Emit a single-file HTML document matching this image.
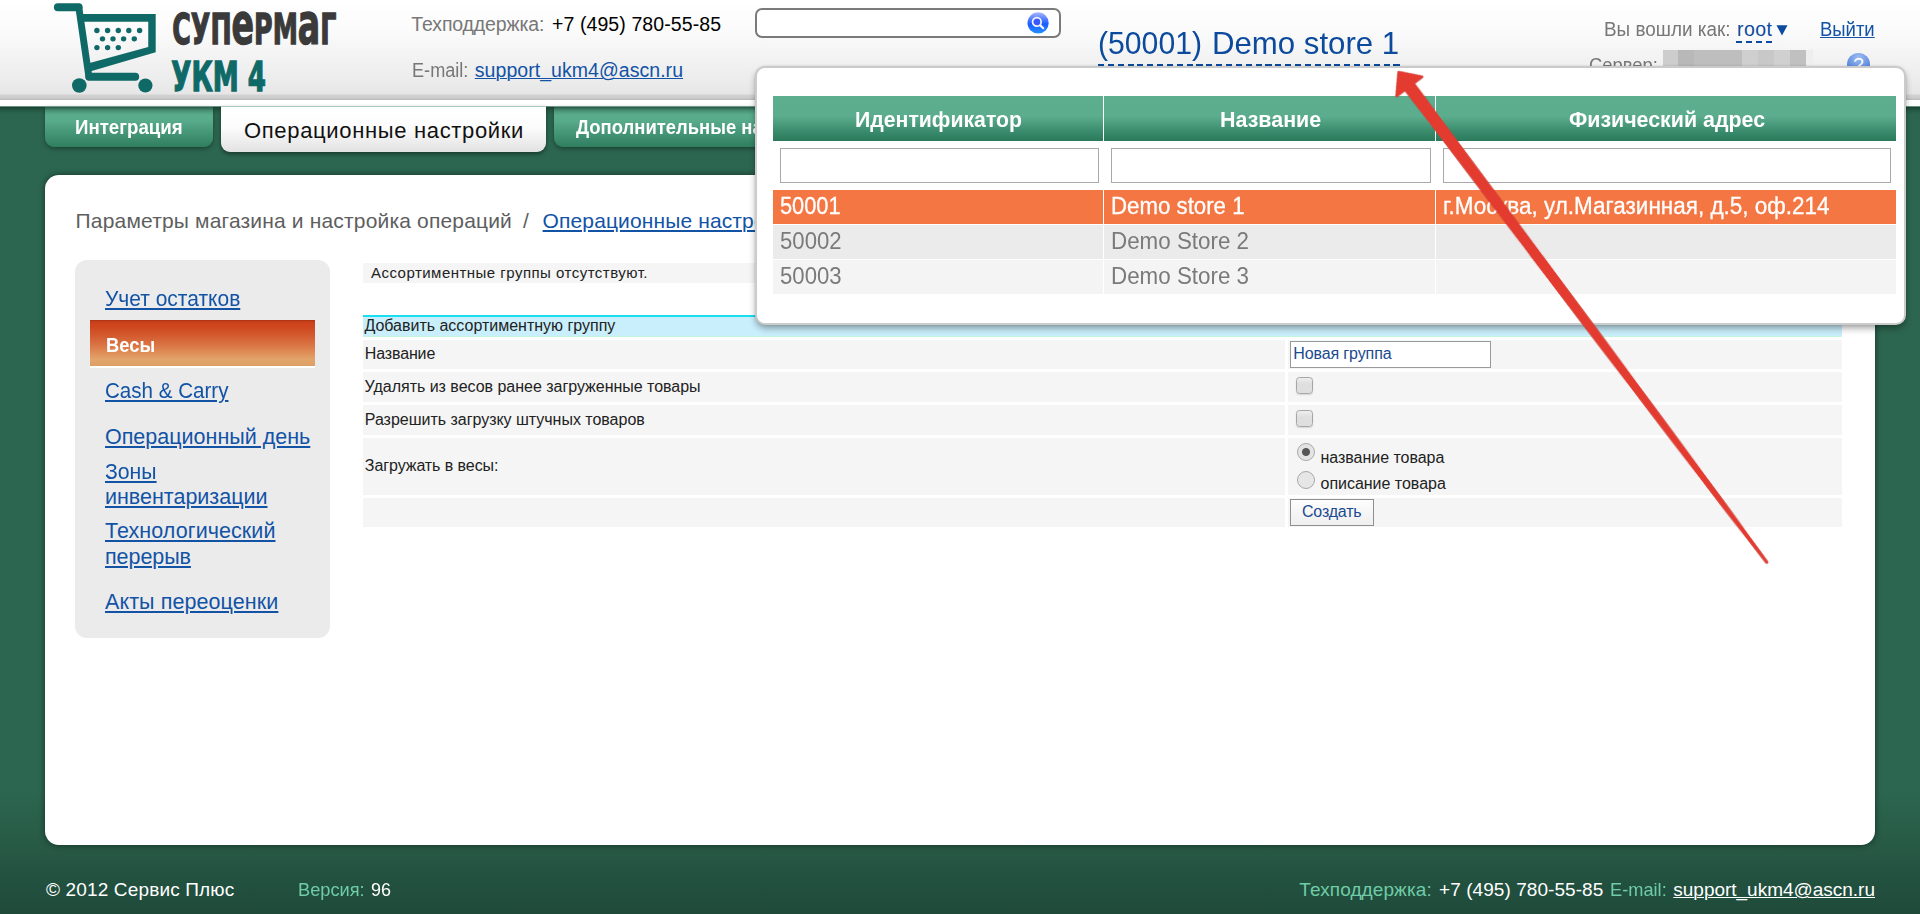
<!DOCTYPE html>
<html lang="ru">
<head>
<meta charset="utf-8">
<title>Супермаг УКМ 4</title>
<style>
*{box-sizing:border-box;}
html,body{margin:0;padding:0;}
body{width:1920px;height:914px;overflow:hidden;position:relative;font-family:"Liberation Sans","DejaVu Sans",sans-serif;background:#2c6650;}
.abs{position:absolute;white-space:nowrap;}
.t{position:absolute;white-space:nowrap;line-height:1em;}
#bg{position:absolute;left:0;top:106px;width:1920px;height:808px;background:linear-gradient(to bottom,#2c6650 0px,#2c6650 7px,#2c6650 685px,#275944 744px,#22503f 778px,#1f4a3a 808px);}
#header{position:absolute;left:0;top:0;width:1920px;height:100px;background:linear-gradient(to bottom,#ffffff 0px,#fbfbfb 30px,#ececec 80px,#e6e6e6 94px,#d2d2d2 95px,#cccccc 98px,#b8b8b8 100px);}
#hwhite{position:absolute;left:0;top:100px;width:1920px;height:6px;background:#fff;}
.tab{position:absolute;top:106px;height:41px;border-radius:0 0 9px 9px;background:linear-gradient(to bottom,#5aad8d 0%,#58ab8b 35%,#2f7e60 100%);box-shadow:0 2px 4px rgba(0,0,0,.35);}
#tabact{position:absolute;left:221px;top:106px;width:325px;height:46px;border-radius:0 0 9px 9px;background:linear-gradient(to bottom,#ffffff 0%,#fcfcfc 45%,#e2e2e2 100%);box-shadow:0 2px 4px rgba(0,0,0,.45);border-top:1px solid #a9cbbd;}
#panel{position:absolute;left:45px;top:175px;width:1830px;height:670px;background:#fff;border-radius:14px;box-shadow:0 0 6px rgba(0,0,0,.5);}
#side{position:absolute;left:75px;top:260px;width:255px;height:378px;background:#ebebeb;border-radius:12px;}
#sact{position:absolute;left:90px;top:320px;width:225px;height:48px;background:linear-gradient(to bottom,#a8320f 0,#c9401a 4%,#cf451e 13%,#d2562a 30%,#d97142 52%,#e08f58 72%,#e2a46b 86%,#dba168 100%);border-bottom:2px solid #fff;}
.row{position:absolute;background:#f5f5f5;}
#popup{position:absolute;left:755px;top:66px;width:1151px;height:259px;background:#fff;border-radius:10px;box-shadow:0 4px 7px -1px rgba(0,0,0,.38),0 0 2px rgba(0,0,0,.12);border:2px solid #cbcbcb;}
.th{position:absolute;top:96px;height:45px;background:linear-gradient(to bottom,#5cae8e 0%,#5bad8d 45%,#3d8f70 75%,#2a795b 100%);}
.fi{position:absolute;top:148px;height:35px;background:#fff;border:1px solid #a9a9a9;}
.tr{position:absolute;height:34px;}
.cb{position:absolute;width:16.5px;height:16.5px;border:1px solid #a6a6a6;border-radius:3.5px;background:linear-gradient(#eeeeee 0,#dfdfdf 40%,#dedede 100%);box-shadow:0 1px 1.5px rgba(0,0,0,.13);}
</style>
</head>
<body>
<div id="bg"></div>
<div id="header"></div>
<div id="hwhite"></div>

<!-- LOGO -->
<svg class="abs" style="left:0;top:0" width="400" height="100" viewBox="0 0 400 100">
 <g fill="none" stroke="#0f6967" stroke-linecap="round">
  <path d="M57.9 7.15 H78.6" stroke-width="8"/>
  <path d="M78.8 7.3 L88.9 76.7" stroke-width="6.9"/>
  <path d="M89.3 76.8 H135.2" stroke-width="8"/>
 </g>
 <path fill-rule="evenodd" d="M79.8 13.9 H155.7 V52.2 L88.3 72.07 Z M80.9 21.66 H148.25 V46.9 L87 63.87 Z" fill="#0f6967"/>
 <circle cx="79.3" cy="85.5" r="7.3" fill="#0f6967"/>
 <circle cx="145.4" cy="85.5" r="7.1" fill="#0f6967"/>
 <g fill="#0f6967">
  <circle cx="96.9" cy="30.5" r="2.7"/><circle cx="107.6" cy="30.5" r="2.7"/><circle cx="118.3" cy="30.5" r="2.7"/><circle cx="128.8" cy="30.5" r="2.7"/><circle cx="139.6" cy="30.5" r="2.7"/>
  <circle cx="102.5" cy="38.85" r="2.7"/><circle cx="113" cy="38.85" r="2.7"/><circle cx="123.6" cy="38.85" r="2.7"/><circle cx="134.3" cy="38.85" r="2.7"/>
  <circle cx="96.9" cy="47.6" r="2.7"/><circle cx="107.6" cy="47.6" r="2.7"/><circle cx="118.3" cy="47.6" r="2.7"/>
 </g>
 <text id="lg1" x="0" y="0" transform="translate(172.3,44.2) scale(0.647,1)" font-family="'DejaVu Sans Condensed','DejaVu Sans',sans-serif" font-weight="bold" font-size="43.5" fill="#3a3a3a" stroke="#3a3a3a" stroke-width="1.3">СУП<tspan font-size="57">е</tspan>РМ<tspan font-size="57">а</tspan>Г</text>
 <text id="lg2" x="0" y="0" transform="translate(171.3,91.2) scale(0.707,1)" font-family="'DejaVu Sans Condensed','DejaVu Sans',sans-serif" font-weight="bold" font-size="41" fill="#0f6967" stroke="#0f6967" stroke-width="1.3">УКМ 4</text>
</svg>

<!-- search -->
<div class="abs" style="left:755px;top:8px;width:306px;height:30px;border:2px solid #7a7a7a;border-radius:7px;background:#fff;"></div>
<svg class="abs" style="left:1026px;top:11px" width="24" height="24" viewBox="0 0 24 24">
 <defs><linearGradient id="sg" x1="0" y1="0" x2="0" y2="1"><stop offset="0" stop-color="#a9b8ff"/><stop offset="0.28" stop-color="#5f84ff"/><stop offset="0.55" stop-color="#1a5cff"/><stop offset="0.85" stop-color="#1f80ff"/><stop offset="1" stop-color="#2792ff"/></linearGradient></defs>
 <circle cx="12.1" cy="11.9" r="10.6" fill="url(#sg)"/>
 <circle cx="10.85" cy="10.9" r="4.3" fill="#3a58ff" stroke="#f4f6ff" stroke-width="1.7"/>
 <path d="M14.3 14.4 L17.2 17.2" stroke="#f4f6ff" stroke-width="2.2" stroke-linecap="round"/>
</svg>

<!-- store title underline -->
<div class="abs" style="left:1098px;top:64px;width:301.5px;height:2px;background:repeating-linear-gradient(to right,#0b4a9c 0,#0b4a9c 6.1px,transparent 6.1px,transparent 9.85px);"></div>

<!-- login bits -->
<div class="abs" style="left:1736px;top:41px;width:36.2px;height:2px;background:repeating-linear-gradient(to right,#0b4a9c 0,#0b4a9c 6px,transparent 6px,transparent 10px);"></div>
<svg class="abs" style="left:1776px;top:25px" width="12" height="11" viewBox="0 0 12 11"><path d="M0.5 0.3 H11.5 L6 10.5 Z" fill="#0b4a9c"/></svg>
<div class="abs" style="left:1663px;top:50px;width:150px;height:20px;background:linear-gradient(to right,#cdcdcd 0,#cdcdcd 15.5px,#b8b8b8 15.5px,#b8b8b8 31px,#bebebe 31px,#bebebe 79px,#cfcfcf 79px,#cfcfcf 95px,#c8c8c8 95px,#c8c8c8 111px,#d0d0d0 111px,#d0d0d0 127px,#c0c0c0 127px,#c0c0c0 143px,#eeeeee 143px);"></div>
<div class="abs" style="left:1847px;top:52.5px;width:23px;height:23px;border-radius:50%;background:radial-gradient(circle at 50% 20%,#9fbdf2,#4a7ddb 75%);color:#fff;font-weight:normal;font-size:19px;text-align:center;line-height:23px;">?</div>

<!-- tabs -->
<div class="tab" style="left:45px;width:168px;"></div>
<div class="tab" style="left:554px;width:300px;"></div>

<div class="abs" style="left:0;top:106px;width:1920px;height:9px;background:linear-gradient(to bottom,rgba(120,150,138,.85) 0,rgba(120,150,138,.85) 1px,rgba(15,50,38,.68) 1px,rgba(15,50,38,.5) 2.5px,rgba(15,50,38,.25) 4.5px,rgba(15,50,38,.08) 7px,rgba(15,50,38,0) 9px);"></div>
<div id="tabact"></div>
<!-- content panel -->
<div id="panel"></div>
<div id="side"></div>
<div id="sact"></div>

<!-- form -->
<div class="row" style="left:363px;top:263px;width:1479px;height:20px;"></div>
<div class="row" style="left:363px;top:315px;width:1479px;height:22px;background:#c9effc;border-top:2px solid #19dff0;border-bottom:1px solid #c4f4dc;"></div>

<div class="row" style="left:363px;top:340px;width:922px;height:29px;"></div>
<div class="row" style="left:1288px;top:340px;width:554px;height:29px;"></div>
<div class="abs" style="left:1290px;top:341px;width:201px;height:27px;border:1px solid #9a9a9a;background:#fff;"></div>

<div class="row" style="left:363px;top:372px;width:922px;height:30px;"></div>
<div class="row" style="left:1288px;top:372px;width:554px;height:30px;"></div>
<div class="cb" style="left:1296px;top:377px;"></div>

<div class="row" style="left:363px;top:405px;width:922px;height:30px;"></div>
<div class="row" style="left:1288px;top:405px;width:554px;height:30px;"></div>
<div class="cb" style="left:1296px;top:410px;"></div>

<div class="row" style="left:363px;top:438px;width:922px;height:57px;"></div>
<div class="row" style="left:1288px;top:438px;width:554px;height:57px;"></div>
<div class="abs" style="left:1297px;top:443px;width:18px;height:18px;border:1px solid #a8a8a8;border-radius:50%;background:radial-gradient(circle,#555 0,#555 3.5px,#e2e2e2 4.5px,#e8e8e8 100%);"></div>
<div class="abs" style="left:1297px;top:471px;width:18px;height:18px;border:1px solid #a8a8a8;border-radius:50%;background:#e6e6e6;"></div>

<div class="row" style="left:363px;top:498px;width:922px;height:29px;"></div>
<div class="row" style="left:1288px;top:498px;width:554px;height:29px;"></div>
<div class="abs" style="left:1290px;top:499px;width:84px;height:27px;border:1px solid #8f8f8f;background:linear-gradient(#fdfdfd,#efefef);"></div>

<div class="t" id="h1a" style="left:411.3px;top:15px;font-size:19.5px;color:#777;letter-spacing:-0.131px;">Техподдержка:</div>
<div class="t" id="h1b" style="left:552.0px;top:15px;font-size:19.5px;color:#000;letter-spacing:0.088px;">+7 (495) 780-55-85</div>
<div class="t" id="h2a" style="left:412.2px;top:61px;font-size:19.5px;color:#777;letter-spacing:0.000px;transform:scaleX(0.9296);transform-origin:0 0;">E-mail:</div>
<a href="#" class="t" id="h2b" style="left:474.8px;top:61px;font-size:19.5px;color:#1253a6;letter-spacing:0.047px;text-decoration:underline;text-decoration-thickness:1.2px;text-underline-offset:1px;">support_ukm4@ascn.ru</a>
<div class="t" id="store" style="left:1098.2px;top:27px;font-size:32px;color:#0b4a9c;letter-spacing:0.000px;transform:scaleX(0.9429);transform-origin:0 0;">(50001)</div>
<div class="t" id="store2" style="left:1211.6px;top:27px;font-size:32px;color:#0b4a9c;letter-spacing:0.000px;transform:scaleX(0.9746);transform-origin:0 0;">Demo store 1</div>
<div class="t" id="h3a" style="left:1603.6px;top:20px;font-size:19.5px;color:#777;letter-spacing:0.000px;transform:scaleX(0.9685);transform-origin:0 0;">Вы вошли как:</div>
<div class="t" id="h3b" style="left:1737.0px;top:20px;font-size:19.5px;color:#0b4a9c;letter-spacing:0.430px;">root</div>
<a href="#" class="t" id="h4" style="left:1820.0px;top:20px;font-size:19.5px;color:#1253a6;letter-spacing:0.000px;text-decoration:underline;text-decoration-thickness:1.2px;text-underline-offset:1px;transform:scaleX(0.9472);transform-origin:0 0;">Выйти</a>
<div class="t" id="h5" style="left:1588.7px;top:56px;font-size:19.5px;color:#777;letter-spacing:0.000px;transform:scaleX(0.9421);transform-origin:0 0;">Сервер:</div>
<div class="t" id="t1" style="left:75.3px;top:118px;font-size:19.5px;color:#fff;letter-spacing:0.000px;font-weight:bold;transform:scaleX(0.9580);transform-origin:0 0;">Интеграция</div>
<div class="t" id="t2" style="left:244.0px;top:120px;font-size:22px;color:#111;letter-spacing:0.664px;">Операционные настройки</div>
<div class="t" id="t3" style="left:576.0px;top:118px;font-size:19.5px;color:#fff;letter-spacing:0.000px;font-weight:bold;transform:scaleX(0.9454);transform-origin:0 0;">Дополнительные настройки</div>
<div class="t" id="bc1" style="left:75.6px;top:210px;font-size:21px;color:#5e5e5e;letter-spacing:0.169px;">Параметры магазина и настройка операций</div>
<div class="t" id="bc2" style="left:523.0px;top:210px;font-size:21px;color:#5e5e5e;letter-spacing:0.000px;">/</div>
<a href="#" class="t" id="bc3" style="left:542.6px;top:210px;font-size:21px;color:#1253a6;letter-spacing:0.126px;text-decoration:underline;text-decoration-thickness:2px;text-underline-offset:2px;">Операционные настройки</a>
<a href="#" class="t" id="s1" style="left:105.0px;top:289px;font-size:21.5px;color:#1253a6;letter-spacing:0.000px;text-decoration:underline;text-decoration-thickness:2px;text-underline-offset:2px;transform:scaleX(0.9761);transform-origin:0 0;">Учет остатков</a>
<div class="t" id="s2" style="left:105.5px;top:334px;font-size:21px;color:#fff;letter-spacing:0.000px;font-weight:bold;transform:scaleX(0.8739);transform-origin:0 0;">Весы</div>
<a href="#" class="t" id="s3" style="left:105.0px;top:381px;font-size:21.5px;color:#1253a6;letter-spacing:0.000px;text-decoration:underline;text-decoration-thickness:2px;text-underline-offset:2px;transform:scaleX(0.9570);transform-origin:0 0;">Cash &amp; Carry</a>
<a href="#" class="t" id="s4" style="left:105.0px;top:427px;font-size:21.5px;color:#1253a6;letter-spacing:0.001px;text-decoration:underline;text-decoration-thickness:2px;text-underline-offset:2px;">Операционный день</a>
<a href="#" class="t" id="s5a" style="left:105.0px;top:462px;font-size:21.5px;color:#1253a6;letter-spacing:0.000px;text-decoration:underline;text-decoration-thickness:2px;text-underline-offset:2px;transform:scaleX(0.9870);transform-origin:0 0;">Зоны</a>
<a href="#" class="t" id="s5b" style="left:105.0px;top:487px;font-size:21.5px;color:#1253a6;letter-spacing:-0.006px;text-decoration:underline;text-decoration-thickness:2px;text-underline-offset:2px;">инвентаризации</a>
<a href="#" class="t" id="s6a" style="left:105.0px;top:521px;font-size:21.5px;color:#1253a6;letter-spacing:0.068px;text-decoration:underline;text-decoration-thickness:2px;text-underline-offset:2px;">Технологический</a>
<a href="#" class="t" id="s6b" style="left:105.0px;top:547px;font-size:21.5px;color:#1253a6;letter-spacing:-0.060px;text-decoration:underline;text-decoration-thickness:2px;text-underline-offset:2px;">перерыв</a>
<a href="#" class="t" id="s7" style="left:105.0px;top:592px;font-size:21.5px;color:#1253a6;letter-spacing:0.088px;text-decoration:underline;text-decoration-thickness:2px;text-underline-offset:2px;">Акты переоценки</a>
<div class="t" id="f0" style="left:371.0px;top:265px;font-size:15px;color:#222;letter-spacing:0.478px;">Ассортиментные группы отсутствуют.</div>
<div class="t" id="f1" style="left:364.4px;top:318px;font-size:16px;color:#222;letter-spacing:-0.009px;">Добавить ассортиментную группу</div>
<div class="t" id="f2" style="left:364.8px;top:346px;font-size:16px;color:#222;letter-spacing:-0.143px;">Название</div>
<div class="t" id="f2v" style="left:1293.2px;top:346px;font-size:16px;color:#1a4a90;letter-spacing:-0.106px;">Новая группа</div>
<div class="t" id="f3" style="left:364.6px;top:379px;font-size:16px;color:#222;letter-spacing:-0.021px;">Удалять из весов ранее загруженные товары</div>
<div class="t" id="f4" style="left:364.8px;top:412px;font-size:16px;color:#222;letter-spacing:-0.021px;">Разрешить загрузку штучных товаров</div>
<div class="t" id="f5" style="left:364.8px;top:458px;font-size:16px;color:#222;letter-spacing:-0.070px;">Загружать в весы:</div>
<div class="t" id="f5a" style="left:1320.5px;top:450px;font-size:16px;color:#222;letter-spacing:-0.035px;">название товара</div>
<div class="t" id="f5b" style="left:1320.5px;top:476px;font-size:16px;color:#222;letter-spacing:-0.020px;">описание товара</div>
<div class="t" id="f6" style="left:1302.0px;top:504px;font-size:16px;color:#1a4a90;letter-spacing:-0.185px;">Создать</div>
<div class="t" id="ft1" style="left:46.0px;top:880px;font-size:19px;color:#fff;letter-spacing:0.149px;">© 2012 Сервис Плюс</div>
<div class="t" id="ft2a" style="left:298.3px;top:880px;font-size:19px;color:#6fcca6;letter-spacing:0.000px;transform:scaleX(0.9597);transform-origin:0 0;">Версия:</div>
<div class="t" id="ft2b" style="left:371.0px;top:880px;font-size:19px;color:#fff;letter-spacing:0.000px;transform:scaleX(0.9460);transform-origin:0 0;">96</div>
<div class="t" id="ft3a" style="left:1299.3px;top:880px;font-size:19px;color:#6fcca6;letter-spacing:0.098px;">Техподдержка:</div>
<div class="t" id="ft3b" style="left:1439.0px;top:880px;font-size:19px;color:#fff;letter-spacing:0.065px;">+7 (495) 780-55-85</div>
<div class="t" id="ft3c" style="left:1610.0px;top:880px;font-size:19px;color:#6fcca6;letter-spacing:0.000px;transform:scaleX(0.9590);transform-origin:0 0;">E-mail:</div>
<a href="#" class="t" id="ft3d" style="left:1673.3px;top:880px;font-size:19px;color:#fff;letter-spacing:-0.016px;text-decoration:underline;text-decoration-thickness:1.2px;text-underline-offset:1px;">support_ukm4@ascn.ru</a>

<!-- popup -->
<div id="popup"></div>
<div class="th" style="left:773px;width:330px;"></div>
<div class="th" style="left:1104px;width:331px;"></div>
<div class="th" style="left:1436px;width:460px;"></div>
<div class="fi" style="left:780px;width:319px;"></div>
<div class="fi" style="left:1111px;width:320px;"></div>
<div class="fi" style="left:1443px;width:448px;"></div>

<div class="tr" style="left:773px;top:190px;width:330px;background:#f47643;"></div>
<div class="tr" style="left:1104px;top:190px;width:331px;background:#f47643;"></div>
<div class="tr" style="left:1436px;top:190px;width:460px;background:#f47643;"></div>
<div class="tr" style="left:773px;top:225px;width:330px;background:#ebebeb;"></div>
<div class="tr" style="left:1104px;top:225px;width:331px;background:#ebebeb;"></div>
<div class="tr" style="left:1436px;top:225px;width:460px;background:#ebebeb;"></div>
<div class="tr" style="left:773px;top:260px;width:330px;background:#f4f4f4;"></div>
<div class="tr" style="left:1104px;top:260px;width:331px;background:#f4f4f4;"></div>
<div class="tr" style="left:1436px;top:260px;width:460px;background:#f4f4f4;"></div>

<div class="t" id="p1" style="left:855.2px;top:109px;font-size:22px;color:#fff;letter-spacing:0.000px;font-weight:bold;transform:scaleX(0.9654);transform-origin:0 0;">Идентификатор</div>
<div class="t" id="p2" style="left:1219.8px;top:109px;font-size:22px;color:#fff;letter-spacing:0.000px;font-weight:bold;transform:scaleX(0.9744);transform-origin:0 0;">Название</div>
<div class="t" id="p3" style="left:1568.5px;top:109px;font-size:22px;color:#fff;letter-spacing:0.000px;font-weight:bold;transform:scaleX(0.9721);transform-origin:0 0;">Физический адрес</div>
<div class="t" id="r1a" style="left:780.4px;top:195px;font-size:23px;color:#fff;letter-spacing:0.000px;-webkit-text-stroke:0.3px #fff;transform:scaleX(0.9473);transform-origin:0 0;">50001</div>
<div class="t" id="r1b" style="left:1111.4px;top:195px;font-size:23px;color:#fff;letter-spacing:0.000px;-webkit-text-stroke:0.3px #fff;transform:scaleX(0.9670);transform-origin:0 0;">Demo store 1</div>
<div class="t" id="r1c" style="left:1443.0px;top:195px;font-size:23px;color:#fff;letter-spacing:0.000px;-webkit-text-stroke:0.3px #fff;transform:scaleX(0.9777);transform-origin:0 0;">г.Москва, ул.Магазинная, д.5, оф.214</div>
<div class="t" id="r2a" style="left:780.4px;top:230px;font-size:23px;color:#7a7a7a;letter-spacing:0.000px;transform:scaleX(0.9630);transform-origin:0 0;">50002</div>
<div class="t" id="r2b" style="left:1111.4px;top:230px;font-size:23px;color:#7a7a7a;letter-spacing:0.000px;transform:scaleX(0.9725);transform-origin:0 0;">Demo Store 2</div>
<div class="t" id="r3a" style="left:780.4px;top:265px;font-size:23px;color:#7a7a7a;letter-spacing:0.000px;transform:scaleX(0.9630);transform-origin:0 0;">50003</div>
<div class="t" id="r3b" style="left:1111.4px;top:265px;font-size:23px;color:#7a7a7a;letter-spacing:0.000px;transform:scaleX(0.9725);transform-origin:0 0;">Demo Store 3</div>

<!-- arrow -->
<svg class="abs" style="left:0;top:0;pointer-events:none" width="1920" height="914" viewBox="0 0 1920 914">
 <g transform="translate(1397.8,71) rotate(53.09)" style="filter:drop-shadow(0.6px 0.8px 0.6px rgba(60,60,60,.45));">
  <path d="M1.6 0 L19.2 -15.9 L19.2 -5.3 L61 -4.75 L198 -4.0 L336 -3.15 L536 -1.4 L614 -0.2 L614.6 0 L614 0.2 L536 1.4 L336 3.15 L198 4.0 L61 4.75 L19.2 5.3 L19.2 15.9 Z" fill="#e43b30" stroke="#e43b30" stroke-width="2.6" stroke-linejoin="round"/>
 </g>
</svg>
</body>
</html>
